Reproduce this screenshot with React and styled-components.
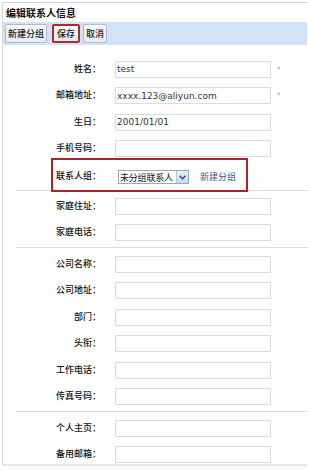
import styled, { createGlobalStyle } from 'styled-components'

const GlobalStyle = createGlobalStyle`
  html, body {
    margin: 0;
    padding: 0;
    background: #fff;
  }
  body {
    font-family: "Noto Sans CJK SC", "Liberation Sans", sans-serif;
    color: #222;
  }
`

const Page = styled.div`
  width: 305px;
  margin-left: 2px;
  margin-top: 2px;
  border-top: 1px solid #d4d4d4;
  border-left: 1px solid #d8d8d8;
  border-bottom: 2px solid #dfe9e2;
  height: 464px;
  box-sizing: border-box;
  overflow: hidden;
`

const Title = styled.div`
  height: 19px;
  display: flex;
  align-items: center;
  padding-left: 3px;
  font-size: 10px;
  font-weight: bold;
  color: #111;
`

const Toolbar = styled.div`
  height: 23px;
  background: #d3e3f7;
  display: flex;
  align-items: center;
  gap: 3px;
  padding: 0 2px;
  box-sizing: border-box;
`

const ToolButton = styled.button`
  height: 19px;
  padding: 0 ${p => (p.$marked ? '3px' : '2px')};
  font-family: inherit;
  font-size: 9px;
  font-weight: 500;
  line-height: 1;
  color: #222;
  background: linear-gradient(#f6f9fd, #e4ecf6);
  border: ${p => (p.$marked ? '2px solid #b3262c' : '1px solid #a9bcd4')};
  border-radius: 2px;
  box-sizing: border-box;
  margin-left: ${p => (p.$marked ? '2px' : '0')};
`

const Section = styled.div`
  padding: ${p => p.$pad || '3px 0'};
`

const Divider = styled.div`
  height: 1px;
  background: #dedede;
  margin-left: 13px;
`

const Row = styled.div`
  height: ${p => p.$h || '26.5px'};
  display: flex;
  align-items: center;
  position: relative;
`

const Label = styled.div`
  width: 98px;
  text-align: right;
  font-size: 9px;
  font-weight: 500;
  color: #111;
  margin-top: -2px;
  flex-shrink: 0;
`

const Field = styled.div`
  width: 156px;
  height: 17px;
  margin-left: 14px;
  border: 1px solid #dcdcdc;
  box-sizing: border-box;
  background: #fff;
  font-family: "DejaVu Sans", "Liberation Sans", sans-serif;
  font-size: 9px;
  color: #333;
  display: flex;
  align-items: center;
  padding-left: 1px;
  white-space: nowrap;
  overflow: hidden;
`

const Required = styled.span`
  margin-left: 6px;
  font-size: 8px;
  color: #e08080;
`

const Select = styled.div`
  margin-left: 17px;
  height: 14px;
  width: 71px;
  border: 1px solid #9aa9ba;
  box-sizing: border-box;
  display: flex;
  align-items: stretch;
  font-size: 9px;
  color: #111;
  background: #fff;
  margin-top: 2px;
  overflow: hidden;
`

const SelectText = styled.span`
  flex: 1;
  display: flex;
  align-items: center;
  padding-left: 1px;
  white-space: nowrap;
  letter-spacing: -0.2px;
`

const SelectArrow = styled.span`
  width: 11px;
  flex-shrink: 0;
  background: linear-gradient(#e8eff9, #c9d9ee);
  border-left: 1px solid #b6c6dc;
  display: flex;
  align-items: center;
  justify-content: center;
`

const LinkText = styled.span`
  margin-left: 11px;
  font-size: 9px;
  color: #3a5a86;
  margin-top: 1px;
`

const Highlight = styled.div`
  position: absolute;
  left: 48px;
  width: 197px;
  top: -4px;
  bottom: -2px;
  border: 2px solid #a6262b;
  box-sizing: border-box;
  pointer-events: none;
`

const FormRow = ({ label, value, required }) => (
  <Row>
    <Label>{label}</Label>
    <Field>{value}</Field>
    {required && <Required>*</Required>}
  </Row>
)

export default function App() {
  return (
    <>
      <GlobalStyle />
      <Page>
        <Title>编辑联系人信息</Title>
        <Toolbar>
          <ToolButton>新建分组</ToolButton>
          <ToolButton $marked>保存</ToolButton>
          <ToolButton>取消</ToolButton>
        </Toolbar>
        <Section $pad="11px 0 0">
          <FormRow label="姓名：" value="test" required />
          <FormRow label="邮箱地址：" value="xxxx.123@aliyun.com" required />
          <FormRow label="生日：" value="2001/01/01" />
          <FormRow label="手机号码：" />
          <Row $h="28px">
            <Label>联系人组：</Label>
            <Select>
              <SelectText>未分组联系人</SelectText>
              <SelectArrow>
                <svg width="7" height="5" viewBox="0 0 7 5">
                  <path d="M0.5 0.8 L3.5 3.8 L6.5 0.8" fill="none" stroke="#2b4f86" strokeWidth="1.5" />
                </svg>
              </SelectArrow>
            </Select>
            <LinkText>新建分组</LinkText>
            <Highlight />
          </Row>
        </Section>
        <Divider />
        <Section $pad="2px 0 1px">
          <FormRow label="家庭住址：" />
          <FormRow label="家庭电话：" />
        </Section>
        <Divider />
        <Section $pad="3px 0 1px">
          <FormRow label="公司名称：" />
          <FormRow label="公司地址：" />
          <FormRow label="部门：" />
          <FormRow label="头衔：" />
          <FormRow label="工作电话：" />
          <FormRow label="传真号码：" />
        </Section>
        <Divider />
        <Section $pad="3px 0 0">
          <FormRow label="个人主页：" />
          <FormRow label="备用邮箱：" />
        </Section>
      </Page>
    </>
  )
}
